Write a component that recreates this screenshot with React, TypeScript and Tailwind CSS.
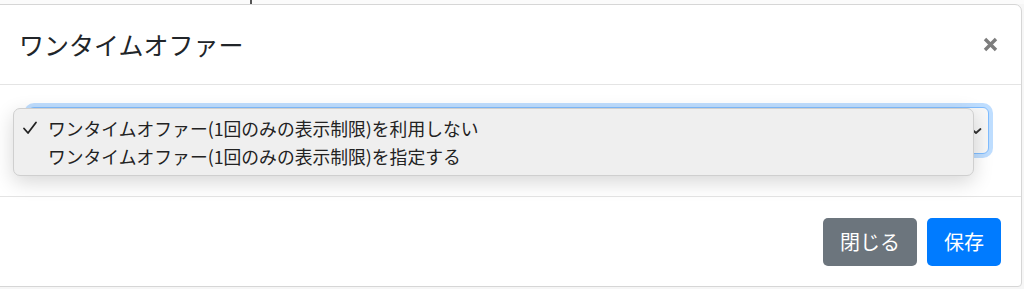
import React from 'react';

const jp = { fontFamily: '"Noto Sans CJK JP", "Noto Sans", sans-serif' };

const options = [
    { label: 'ワンタイムオファー(1回のみの表示制限)を利用しない', checked: true },
    { label: 'ワンタイムオファー(1回のみの表示制限)を指定する', checked: false },
];

const CheckMark: React.FC = () => (
    <svg width="16" height="16" viewBox="0 0 16 16" fill="none">
        <path d="M2 8.5 L6 13 L14 2.5" stroke="#222" strokeWidth="1.8" strokeLinecap="round" strokeLinejoin="round" />
    </svg>
);

const App: React.FC = () => {
    return (
        <div className="w-[1024px] h-[289px] overflow-hidden bg-[#f6f6f6]" style={jp}>
            {/* backdrop strip above the modal */}
            <div className="h-[4px] flex bg-[#fbfbfb]">
                <span className="ml-[250px] w-[2px] h-full bg-[#555]"></span>
            </div>

            <div className="ml-[-2px] w-[1024px] h-[283px] bg-white border border-[#d6d6d6] rounded-tr-[7px] rounded-br-[4px] flex flex-col">
                {/* header */}
                <div className="h-[80px] shrink-0 flex items-center justify-between pl-[20px] pr-[24px] border-b border-[#e4e4e4]">
                    <h5 className="text-[25px] leading-none text-[#212529]">ワンタイムオファー</h5>
                    <svg width="15" height="15" viewBox="0 0 15 15" className="mr-[-1px]">
                        <path d="M2 2 L13 13 M13 2 L2 13" stroke="#7d7d7d" strokeWidth="3.4" strokeLinecap="butt" />
                    </svg>
                </div>

                {/* body */}
                <div className="relative h-[112px] shrink-0 pt-[22px] pl-[29px] pr-[32px] border-b border-[#e4e4e4]">
                    <div className="h-[47px] rounded-[6px] border border-[#80bdff] bg-[#f7f7f7] shadow-[0_0_0_4px_rgba(0,123,255,0.25)] flex items-center justify-end pr-[6px]">
                        <svg width="12" height="8" viewBox="0 0 12 8" fill="none">
                            <path d="M1.5 2 L6 6 L10.5 2" stroke="#333" strokeWidth="1.8" strokeLinecap="round" strokeLinejoin="round" />
                        </svg>
                    </div>

                    {/* native popup menu */}
                    <div className="absolute left-[14px] top-[23px] w-[961px] h-[68px] rounded-[7px] border border-[#cfcfcf] bg-[#efefef] shadow-[0_6px_20px_rgba(0,0,0,0.16)] flex flex-col justify-center py-[4px]">
                        {options.map((o) => (
                            <div key={o.label} className="h-[28px] flex items-center text-[17.8px] text-[#222]">
                                <span className="w-[34px] pl-[8px] flex items-center">
                                    {o.checked && <CheckMark />}
                                </span>
                                <span>{o.label}</span>
                            </div>
                        ))}
                    </div>
                </div>

                {/* footer */}
                <div className="flex-1 flex items-center justify-end gap-[10px] pr-[20px]">
                    <button className="h-[48px] px-[17px] rounded-[5px] bg-[#6c757d] text-white text-[20px]">閉じる</button>
                    <button className="h-[48px] px-[17px] rounded-[5px] bg-[#007bff] text-white text-[20px]">保存</button>
                </div>
            </div>
        </div>
    );
};

export default App;
